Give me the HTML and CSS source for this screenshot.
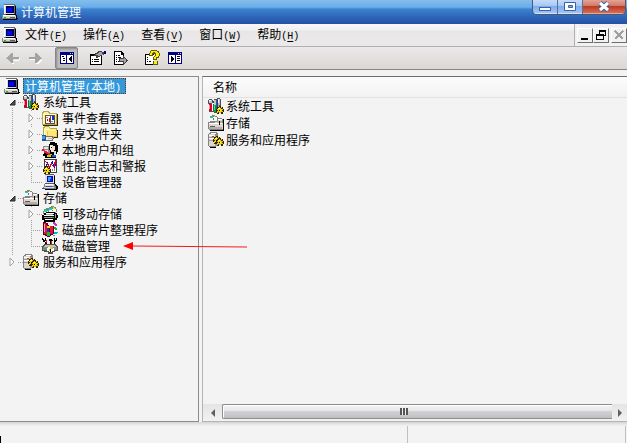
FILE: index.html
```html
<!DOCTYPE html>
<html lang="zh-CN">
<head>
    <meta charset="UTF-8">
    <meta name="viewport" content="width=device-width, initial-scale=1.0">
    <title>计算机管理</title>
    <link rel="stylesheet" href="styles.css">
</head>
<body>
    <!-- Icon set, 16x16 grid -->
    <svg class="sprite" aria-hidden="true">
        <symbol id="i-pc" viewBox="0 0 16 16">
            <path fill="#6b696b" d="M2 0h11v1h1v10H2z"/>
            <path fill="#dedbde" d="M2 1h10v9H2z"/>
            <path fill="#fff" d="M2 1h10v1H3v8H2z"/>
            <path fill="#00005a" d="M4 2h8v7H4z"/>
            <path fill="#0008f7" d="M5 4h5v4H5z"/>
            <path fill="#000" d="M13 2h1v9h1v3h1v1h-1v1H1v-1h13v-4H4v-1h9z"/>
            <path fill="#848284" d="M0 11h14v4H0z"/>
            <path fill="#d6d3ce" d="M1 12h13v2H1z"/>
            <path fill="#fff" d="M1 11h12v1H1z"/>
            <path fill="#00c700" d="M2 13h2v1H2z"/>
            <path fill="#5a595a" d="M8 13h5v1H8z"/>
        </symbol>
        <symbol id="i-gear" viewBox="0 0 8 8">
            <path fill="#312800" d="M3 0h2v1h2v2h1v3H7v2H5V7H3v1H1V6H0V3h1V1h2z"/>
            <path fill="#efcf00" d="M3 1h1v1h1V1h1v1H5v1h2v1H6v1h1v1H5v1H3V6H2v1H1V5h1V4H1V3h1V2h1z"/>
            <path fill="#ffff7b" d="M2 2h2v1H2zM4 4h1v1H4z"/>
            <path fill="#000" d="M3 4h1v1H3z"/>
        </symbol>
        <symbol id="i-tools" viewBox="0 0 16 16">
            <path fill="#525152" d="M0 2h1V1h3v1h1v4h1v8H1V6H0zM6 1h3v14H6zM9 0h3v1h1v12H9z"/>
            <path fill="#c6c3c6" d="M1 2h3v3H1zM6 2h2v5H6zM10 1h2v6h-2z"/>
            <path fill="#fff" d="M1 2h2v1H1zM10 1h1v6h-1zM4 5h1v8H4z"/>
            <path fill="#de0021" d="M1 6h3v7H1z"/>
            <path fill="#ff8c94" d="M1 7h1v4H1z"/>
            <path fill="#009a42" d="M6 7h2v7H6z"/>
            <path fill="#21e78c" d="M6 7h1v5H6z"/>
            <path fill="#1049b5" d="M9 2h1v8H9zM5 3h1v2H5z"/>
            <path fill="#8cb6e7" d="M10 5h1v4h-1z"/>
            <use href="#i-gear" x="8" y="8" width="8" height="8"/>
        </symbol>
        <symbol id="i-folder" viewBox="0 0 16 16">
            <path fill="#b5a652" d="M0 2h1V1h6v1h1v1h7v12H0z"/>
            <path fill="#ffef8c" d="M1 3h1V2h4v1h1v1h7v10H1z"/>
            <path fill="#fffbce" d="M1 4h13v1H2v9H1z"/>
            <path fill="#312c00" d="M15 4h1v12H1v-1h14z"/>
        </symbol>
        <symbol id="i-event" viewBox="0 0 16 16">
            <use href="#i-folder" width="16" height="16"/>
            <path fill="#525152" d="M3 5h10v9H3z"/>
            <path fill="#fff" d="M4 6h4v7H4zM9 6h3v7H9z"/>
            <path fill="#d60000" d="M7 8h1v4H7zM5 9h1v2H5z"/>
            <path fill="#1828e7" d="M10 6h2v4h-2z"/>
            <path fill="#8c8e8c" d="M4 7h2v1H4zM9 11h2v1H9z"/>
        </symbol>
        <symbol id="i-share" viewBox="0 0 16 16">
            <path fill="#b5a652" d="M1 1h1V0h5v1h1v1h7v10H1z"/>
            <path fill="#ffef8c" d="M2 2h1V1h4v1h1v1h6v8H2z"/>
            <path fill="#fffbce" d="M2 3h5v1H3v5H2z"/>
            <path fill="#e7c752" d="M5 5h10v6H5z"/>
            <path fill="#ffe773" d="M6 5h9v1h-1v4H6z"/>
            <path fill="#312c00" d="M15 4h1v8h-5v-1h4z"/>
            <path fill="#18599c" d="M0 9h4v6H0z"/>
            <path fill="#4a9ade" d="M0 10h3v3H0z"/>
            <path fill="#737173" d="M4 10h7v1h1v2h-1v2H4z"/>
            <path fill="#f7ebe7" d="M4 11h6v3H4z"/>
            <path fill="#c6bab5" d="M6 12h5v1H6z"/>
        </symbol>
        <symbol id="i-users" viewBox="0 0 16 16">
            <path fill="#8c8a8c" d="M1 4h6v3h1v4H2V7H1z"/>
            <path fill="#e7e3e7" d="M2 5h4v2H2zM3 8h3v2H3z"/>
            <path fill="#000" d="M8 0h5v1h2v2h1v7h-1v2h-3v1H9v-2H8V8H7V2h1zM2 11h9v3h3v2H3v-2H1v-2h1z"/>
            <path fill="#f7e3ce" d="M8 3h3v1h2v4h-1v2H9V8H8z"/>
            <path fill="#fff" d="M8 4h2v3H8z"/>
            <path fill="#000" d="M9 5h1v1H9z"/>
            <path fill="#ef1831" d="M0 7h2v1h1v1h2v1h1v1h2v2H6v-1H4v-1H2V9H0z"/>
            <path fill="#c6d700" d="M5 13h4v2H5zM8 12h2v1H8z"/>
            <path fill="#1855ce" d="M10 13h4v2h-4z"/>
            <path fill="#dedfe7" d="M12 9h2v3h-2z"/>
        </symbol>
        <symbol id="i-perf" viewBox="0 0 16 16">
            <path fill="#424142" d="M2 1h13v14H2z"/>
            <path fill="#fff" d="M3 2h11v12H3z"/>
            <path fill="#0010ce" d="M3 8h1V6h1V4h1v2h1v2h1V6h1V4h1V3h1v3h1v2h1V5h1v3h-1v2h-1V8h-1V6h-1v1H9v2H8v1H7V8H6V7H5v2H3z"/>
            <path fill="#e70021" d="M3 3h1v1h1v1h1v2h1v1h1V6h1V5h1v2h1v1h1V4h1V2h1v4h-1v3h-2V8h-1V7H9v2H6V7H5V5H4V4H3z"/>
            <path fill="#848684" d="M10 11h1v2h-1zM12 10h1v3h-1z"/>
            <use href="#i-gear" x="1" y="8" width="8" height="8"/>
        </symbol>
        <symbol id="i-device" viewBox="0 0 16 16">
            <path fill="#5a595a" d="M3 0h9v1h1v9H3z"/>
            <path fill="#dedfe7" d="M3 1h9v8H3z"/>
            <path fill="#00109c" d="M5 2h6v6H5z"/>
            <path fill="#39a2ff" d="M6 3h3v2H8v2H6z"/>
            <path fill="#0028ff" d="M9 3h1v4H8V5h1z"/>
            <path fill="#000" d="M12 2h1v8h1v1h1v1h1v3h-1v1H3v-1h11v-3h-2z"/>
            <path fill="#848284" d="M2 10h11v2h1v3H1v-2h1z"/>
            <path fill="#dedbde" d="M3 10h9v2H3zM2 13h10v1H2z"/>
            <path fill="#fff" d="M3 10h8v1H3z"/>
            <path fill="#3151ad" d="M0 14h3v1H0zM4 12h6v1H4z"/>
        </symbol>
        <symbol id="i-disc" viewBox="0 0 10 10">
            <path fill="#848684" d="M3 0h4v1h2v2h1v4H9v2H1V7H0V3h1V1h2z"/>
            <path fill="#f7f3f7" d="M3 1h4v1h1v1h1v4H8v1H2V7H1V3h1V2h1z"/>
            <path fill="#00d7de" d="M2 2h2v2H1V3h1z"/>
            <path fill="#ffef00" d="M5 1h2v1h1v1H6v1H5z"/>
            <path fill="#21c721" d="M3 1h2v2H4V2H3z"/>
            <path fill="#737173" d="M4 4h2v2H4z"/>
        </symbol>
        <symbol id="i-storage" viewBox="0 0 16 16">
            <path fill="#848284" d="M7 3h7v1h1v11H1v-1H0V7h7z"/>
            <path fill="#ded7ce" d="M7 4h7v4h1v6H1V8h6z"/>
            <path fill="#fff" d="M9 4h5v1H9zM1 8h13v1H1z"/>
            <path fill="#b5aea5" d="M9 6h5v2H9zM1 12h13v2H1z"/>
            <path fill="#000" d="M15 4h1v12H2v-1h13zM11 6h1v4h-1z"/>
            <path fill="#5a595a" d="M2 11h5v1H2z"/>
            <use href="#i-disc" x="1" y="0" width="9" height="8"/>
        </symbol>
        <symbol id="i-services" viewBox="0 0 16 16">
            <path fill="#848284" d="M1 1h1V0h7v1h1v13H8v1H1v-1H0V2h1z"/>
            <path fill="#ded7ce" d="M1 2h6v12H1z"/>
            <path fill="#fff" d="M1 3h5v1H1zM1 6h5v1H1zM3 1h5v1H3z"/>
            <path fill="#9c9a9c" d="M1 5h5v1H1zM1 8h5v1H1zM7 3h2v11H7z"/>
            <path fill="#d62c18" d="M4 4h2v1H4z"/>
            <path fill="#000" d="M2 15h6v1H2z"/>
            <use href="#i-gear" x="5" y="4" width="8" height="8"/>
            <use href="#i-gear" x="8" y="6" width="8" height="8"/>
        </symbol>
        <symbol id="i-removable" viewBox="0 0 16 16">
            <use href="#i-disc" x="1" y="2" width="9" height="9"/>
            <use href="#i-disc" x="6" y="0" width="9" height="9"/>
            <path fill="#000" d="M4 6h9v1h2v2h1v3h-1v2h-2v2H2v-2H0V9h2V7h2z"/>
            <path fill="#fff" d="M4 7h8v1H4zM2 9h10v1H2zM3 13h8v1H3z"/>
            <path fill="#9c9a9c" d="M4 8h7v1H4zM2 11h10v1H2zM13 8h1v4h-1z"/>
            <path fill="#00c742" d="M10 11h2v1h-2z"/>
        </symbol>
        <symbol id="i-defrag" viewBox="0 0 16 16">
            <path fill="#5a0018" d="M1 0h3v1h2v2h1v1h5v8h-1v1H9v1H8v1H5v-1H3v-1H1z"/>
            <path fill="#e71042" d="M2 1h2v2h1v10H4v-1H2z"/>
            <path fill="#ff9cad" d="M2 2h1v8H2z"/>
            <path fill="#2134d6" d="M5 6h2v4H5z"/>
            <path fill="#ffd700" d="M5 4h3v2H5z"/>
            <path fill="#ef1831" d="M8 4h3v4H8z"/>
            <path fill="#18b631" d="M5 10h3v4H5z"/>
            <path fill="#de1042" d="M8 8h3v4H8z"/>
            <path fill="#c631b5" d="M11 0h2v1h1v1h1v2h-2V3h-1V2h-1z"/>
            <path fill="#18a642" d="M12 5h2v1h1v2h-2V7h-1z"/>
            <path fill="#00b6ce" d="M12 10h4v1h-1v1h-3zM11 13h2v1h-2z"/>
        </symbol>
        <symbol id="i-disk" viewBox="0 0 16 16">
            <path fill="#000" d="M0 0h1v1h1v1h1V0h1v3H3v1h1v1h1v2H4V6H3V4H1V2H0zM7 1h3v1h1v1H9v4H8V3H7zM12 0h1v2h1V0h1v3h-1v1h-1v3h-1z"/>
            <path fill="#d61829" d="M9 3h1v3H9zM4 2h1v3H4z"/>
            <path fill="#525152" d="M2 6h12v1h1v1h1v5h-3v1h-2v2H6v-2H2v-1H0V8h1V7h1z"/>
            <path fill="#c6c3c6" d="M3 7h10v1h1v1H2V8h1z"/>
            <path fill="#8c8a8c" d="M1 9h14v3H1z"/>
            <path fill="#fff" d="M6 9h5v1h1v3h-2v1H7v-1H5v-3h1z"/>
            <path fill="#d6cf18" d="M8 9h3v2H9v2H7v-2h1z"/>
            <path fill="#000" d="M8 11h1v3H8z"/>
            <path fill="#00c742" d="M2 10h2v1H2z"/>
        </symbol>
        <symbol id="i-back" viewBox="0 0 16 16">
            <path fill="#fff" d="M3 9h1v1h1v1h1v1h1v1h2v-3h6V8h-1v3H9v3H7v-1H6v-1H5v-1H4v-1H3z"/>
            <path fill="#a5a3a5" d="M1 8h1V7h1V6h1V5h1V4h1V3h2v4h6v2H8v4H6v-1H5v-1H4v-1H3V9H1z"/>
        </symbol>
        <symbol id="i-forward" viewBox="0 0 16 16">
            <path fill="#fff" d="M2 9h6v4h2v-1h1v-1h1v-1h1V9h1v1l-4 4H8v-4H2z"/>
            <path fill="#a5a3a5" d="M14 8h-1V7h-1V6h-1V5h-1V4H9V3H7v4H1v2h6v4h2v-1h1v-1h1v-1h1V9h2z"/>
        </symbol>
        <symbol id="i-tree" viewBox="0 0 16 16">
            <path fill="#000084" d="M1 2h14v12H1z"/>
            <path fill="#fff" d="M2 5h5v8H2zM8 5h6v8H8z"/>
            <path fill="#000" d="M3 6h2v1H3zM4 8h2v1H4zM4 10h2v1H4zM12 6h1v6h-1v-1h-1v-1h-1V8h1V7h1z"/>
            <path fill="#c6c7ef" d="M11 3h1v1h-1zM13 3h1v1h-1z"/>
        </symbol>
        <symbol id="i-action" viewBox="0 0 16 16">
            <path fill="#000084" d="M1 2h14v12H1z"/>
            <path fill="#fff" d="M2 5h6v8H2zM9 5h5v8H9z"/>
            <path fill="#000" d="M10 6h3v1h-3zM10 8h3v1h-3zM10 10h3v1h-3zM4 6h1v1h1v1h1v2H6v1H5v1H4z"/>
            <path fill="#c6c7ef" d="M11 3h1v1h-1zM13 3h1v1h-1z"/>
        </symbol>
        <symbol id="i-props" viewBox="0 0 16 16">
            <path fill="#000" d="M0 4h12v11H0z"/>
            <path fill="#fff" d="M1 6h10v8H1z"/>
            <path fill="#000" d="M2 9h1v1H2zM4 9h5v1H4zM2 11h1v1H2zM4 11h5v1H4z"/>
            <path fill="#424142" d="M5 3h2V2h1V1h4v1h2v3h-2v1h-2v1H8v1H6V6H4V5h1z"/>
            <path fill="#a5a2a5" d="M6 4h2V3h1V2h3v2h1v1h-3v1H8V5H6z"/>
            <path fill="#000084" d="M14 1h2v3h-2z"/>
        </symbol>
        <symbol id="i-export" viewBox="0 0 16 16">
            <path fill="#000" d="M1 1h8v1h1v1h1v5h-1V5H8V2H2v12h9v1H1z"/>
            <path fill="#fff" d="M2 2h6v3h2v9H2z"/>
            <path fill="#000" d="M8 2h1v2h2v1H8zM3 5h1v1H3zM5 5h2v1H5zM3 7h1v1H3zM5 7h3v1H5zM3 9h1v1H3zM3 11h1v1H3zM5 11h2v1H5z"/>
            <path fill="#424142" d="M6 8h4V6h1v1h1v1h1v1h1v1h1v1h-1v1h-1v1h-1v1h-1v1h-1v-3H6z"/>
            <path fill="#a5a2a5" d="M7 9h4V8l2 2v1l-2 2v-2H7z"/>
        </symbol>
        <symbol id="i-help" viewBox="0 0 16 16">
            <path fill="#000" d="M1 4h9v11H1z"/>
            <path fill="#fff" d="M2 5h8v9H2z"/>
            <path fill="#000" d="M3 7h1v1H3zM3 9h1v1H3zM3 11h1v1H3zM5 11h2v1H5z"/>
            <path fill="#635900" d="M7 0h6v1h2v2h1v3h-1v2h-2v2H9V7h1V6h1V4H9v2H5V3h1V1h1zM9 11h5v4H9z"/>
            <path fill="#ffef00" d="M7 1h6v1h1v1h1v3h-1v1h-2v2h-2V7h1V6h1V3h-1V2H9v1H8v2H6V3h1zM10 11h3v3h-3z"/>
        </symbol>
    </svg>

    <div class="window">
        <header class="title-bar">
            <svg class="icon"><use href="#i-pc"/></svg>
            <h1>计算机管理</h1>
            <div class="window-buttons">
                <button type="button" class="win-btn" aria-label="最小化">
                    <svg width="14" height="12"><rect x="1.5" y="6.5" width="11" height="3" fill="#fff" stroke="#3a62ac"/></svg>
                </button>
                <button type="button" class="win-btn" aria-label="最大化">
                    <svg width="14" height="12"><path fill="#fff" stroke="#3a62ac" fill-rule="evenodd" d="M1.5 1.5h11v8h-11zM5.500 4.500v2h4v-2z"/></svg>
                </button>
                <button type="button" class="win-btn win-close" aria-label="关闭">
                    <svg width="14" height="12"><path fill="none" stroke="#3f5ea8" stroke-width="5" d="M3 2l8 7M11 2l-8 7"/><path fill="none" stroke="#fff" stroke-width="3" d="M3 2l8 7M11 2l-8 7"/></svg>
                </button>
            </div>
        </header>

        <nav class="menu-bar">
            <svg class="icon"><use href="#i-pc"/></svg>
            <div class="menus">
                <button type="button">文件<span class="key">(<u>F</u>)</span></button>
                <button type="button">操作<span class="key">(<u>A</u>)</span></button>
                <button type="button">查看<span class="key">(<u>V</u>)</span></button>
                <button type="button">窗口<span class="key">(<u>W</u>)</span></button>
                <button type="button">帮助<span class="key">(<u>H</u>)</span></button>
            </div>
            <div class="child-buttons">
                <button type="button" aria-label="最小化窗口"><svg width="12" height="12"><path d="M2 9h7v2H2z"/></svg></button>
                <button type="button" aria-label="还原窗口"><svg width="12" height="12"><path fill-rule="evenodd" d="M4 1h7v6H9v4H1V5h3zM5 3v2h4v1h1V3zM2 7v3h6V7z"/></svg></button>
                <button type="button" class="off" aria-label="关闭窗口" disabled><svg width="12" height="12"><path d="M2 2l8 8M10 2l-8 8"/></svg></button>
            </div>
        </nav>

        <div class="toolbar">
            <div class="tool-group">
                <button type="button" aria-label="后退" disabled><svg class="icon"><use href="#i-back"/></svg></button>
                <button type="button" aria-label="前进" disabled><svg class="icon"><use href="#i-forward"/></svg></button>
            </div>
            <div class="tool-group">
                <button type="button" class="pressed" aria-label="显示控制台树" aria-pressed="true"><svg class="icon"><use href="#i-tree"/></svg></button>
            </div>
            <div class="tool-group">
                <button type="button" aria-label="属性"><svg class="icon"><use href="#i-props"/></svg></button>
                <button type="button" aria-label="导出列表"><svg class="icon"><use href="#i-export"/></svg></button>
            </div>
            <div class="tool-group">
                <button type="button" aria-label="帮助"><svg class="icon"><use href="#i-help"/></svg></button>
                <button type="button" aria-label="显示操作窗格"><svg class="icon"><use href="#i-action"/></svg></button>
            </div>
        </div>

        <main class="workspace">
            <section class="tree-pane">
                <div class="row root">
                    <svg class="icon"><use href="#i-pc"/></svg>
                    <a href="#" class="selected">计算机管理<span class="key">(</span>本地<span class="key">)</span></a>
                </div>
                <ul class="tree">
                    <li>
                        <div class="row">
                            <button type="button" class="expander" aria-label="折叠"><svg width="8" height="8"><path class="open" d="M7 2v5H2z"/></svg></button>
                            <svg class="icon"><use href="#i-tools"/></svg>
                            <a href="#">系统工具</a>
                        </div>
                        <ul>
                            <li><div class="row">
                                <button type="button" class="expander" aria-label="展开"><svg width="8" height="10"><path class="shut" d="M2 1v8l4-4z"/></svg></button>
                                <svg class="icon"><use href="#i-event"/></svg>
                                <a href="#">事件查看器</a>
                            </div></li>
                            <li><div class="row">
                                <button type="button" class="expander" aria-label="展开"><svg width="8" height="10"><path class="shut" d="M2 1v8l4-4z"/></svg></button>
                                <svg class="icon"><use href="#i-share"/></svg>
                                <a href="#">共享文件夹</a>
                            </div></li>
                            <li><div class="row">
                                <button type="button" class="expander" aria-label="展开"><svg width="8" height="10"><path class="shut" d="M2 1v8l4-4z"/></svg></button>
                                <svg class="icon"><use href="#i-users"/></svg>
                                <a href="#">本地用户和组</a>
                            </div></li>
                            <li><div class="row">
                                <button type="button" class="expander" aria-label="展开"><svg width="8" height="10"><path class="shut" d="M2 1v8l4-4z"/></svg></button>
                                <svg class="icon"><use href="#i-perf"/></svg>
                                <a href="#">性能日志和警报</a>
                            </div></li>
                            <li><div class="row leaf">
                                <svg class="icon"><use href="#i-device"/></svg>
                                <a href="#">设备管理器</a>
                            </div></li>
                        </ul>
                    </li>
                    <li>
                        <div class="row">
                            <button type="button" class="expander" aria-label="折叠"><svg width="8" height="8"><path class="open" d="M7 2v5H2z"/></svg></button>
                            <svg class="icon"><use href="#i-storage"/></svg>
                            <a href="#">存储</a>
                        </div>
                        <ul>
                            <li><div class="row">
                                <button type="button" class="expander" aria-label="展开"><svg width="8" height="10"><path class="shut" d="M2 1v8l4-4z"/></svg></button>
                                <svg class="icon"><use href="#i-removable"/></svg>
                                <a href="#">可移动存储</a>
                            </div></li>
                            <li><div class="row leaf">
                                <svg class="icon"><use href="#i-defrag"/></svg>
                                <a href="#">磁盘碎片整理程序</a>
                            </div></li>
                            <li><div class="row leaf">
                                <svg class="icon"><use href="#i-disk"/></svg>
                                <a href="#">磁盘管理</a>
                                <span class="pointer"><svg width="125" height="8" aria-hidden="true">
                                    <path d="M10 4L124 5" stroke="#f01c1c"/>
                                    <path d="M0 4L10 0v8z" fill="#f00"/>
                                </svg></span>
                            </div></li>
                        </ul>
                    </li>
                    <li>
                        <div class="row">
                            <button type="button" class="expander" aria-label="展开"><svg width="8" height="10"><path class="shut" d="M2 1v8l4-4z"/></svg></button>
                            <svg class="icon"><use href="#i-services"/></svg>
                            <a href="#">服务和应用程序</a>
                        </div>
                    </li>
                </ul>
            </section>

            <section class="list-pane">
                <table>
                    <thead>
                        <tr><th scope="col">名称</th></tr>
                    </thead>
                    <tbody>
                        <tr><td><a href="#"><svg class="icon"><use href="#i-tools"/></svg>系统工具</a></td></tr>
                        <tr><td><a href="#"><svg class="icon"><use href="#i-storage"/></svg>存储</a></td></tr>
                        <tr><td><a href="#"><svg class="icon"><use href="#i-services"/></svg>服务和应用程序</a></td></tr>
                    </tbody>
                </table>
                <div class="scrollbar">
                    <button type="button" aria-label="向左滚动"><svg width="6" height="8"><path d="M5 0v8L1 4z"/></svg></button>
                    <div class="thumb"><span class="grip"></span></div>
                    <button type="button" aria-label="向右滚动"><svg width="6" height="8"><path d="M1 0v8l4-4z"/></svg></button>
                </div>
            </section>
        </main>

        <footer class="status-bar">
            <div class="status-main"></div>
            <div class="status-side"></div>
        </footer>
    </div>
</body>
</html>
```
FILE: styles.css
```css
* {
    box-sizing: border-box;
    margin: 0;
    padding: 0;
}

body {
    background-color: #f3f3f3;
    color: #000;
    font-family: "Noto Sans CJK SC", sans-serif;
    font-size: 12px;
    line-height: 16px;
}

button {
    border: none;
    background: none;
    color: inherit;
    font: inherit;
}

a {
    color: inherit;
    text-decoration: none;
}

ul {
    list-style: none;
}

svg {
    display: block;
    flex: none;
}

.sprite {
    position: absolute;
    width: 0;
    height: 0;
}

.icon {
    width: 16px;
    height: 16px;
    shape-rendering: crispEdges;
}

.key {
    font-family: "Liberation Mono", monospace;
    font-size: 10px;
}

.window {
    display: flex;
    flex-direction: column;
    height: 100vh;
}

/* Title bar */
.title-bar {
    display: flex;
    align-items: center;
    gap: 1px;
    height: 24px;
    padding: 0 1px 0 2px;
    color: #fff;
    background: linear-gradient(#84bdec, #69aee8 30%, #3b82d0 38%, #2c62b6 75%, #2450a4);
}

.title-bar h1 {
    flex: 1;
    padding-left: 2px;
    font-size: 12px;
    font-weight: normal;
}

.window-buttons {
    display: flex;
    align-self: flex-start;
    border: 1px solid #4a5874;
    border-top: none;
    border-radius: 0 0 5px 5px;
    overflow: hidden;
}

.win-btn {
    display: flex;
    align-items: center;
    justify-content: center;
    width: 25px;
    height: 14px;
    border-right: 1px solid #56719c;
    background: linear-gradient(#c4dcf8, #a8c8f4 40%, #7fabea 45%, #a6c8f6);
    box-shadow: inset 0 -1px #cfe2fa;
}

.win-close {
    width: 42px;
    border-right: none;
    background: linear-gradient(#e2a598, #d47a68 40%, #b93a22 45%, #d8765c);
    box-shadow: inset 0 -1px #e8a898;
}

/* Menu bar */
.menu-bar {
    display: flex;
    align-items: center;
    height: 23px;
    padding-left: 2px;
    border-bottom: 1px solid #b0b0b0;
    background: linear-gradient(#f8f8f8, #f0f0f0 28%, #e8e6e6 32%, #ebe9e9);
}

.menus {
    display: flex;
    flex: 1;
    gap: 16px;
    padding-left: 7px;
}

.menus u {
    text-underline-offset: 2px;
}

.child-buttons {
    display: flex;
    align-items: center;
    height: 22px;
    padding-left: 2px;
    border-left: 1px solid #b0b0b0;
    background-color: #f1f1f1;
}

.child-buttons button {
    display: flex;
    align-items: center;
    justify-content: center;
    width: 16px;
    height: 15px;
    border: 1px solid #fff;
    border-right-color: #6e6e6e;
    border-bottom-color: #6e6e6e;
    shape-rendering: crispEdges;
}

.child-buttons .off {
    margin-left: 2px;
    stroke: #a0a0a0;
    stroke-width: 2px;
}

/* Toolbar */
.toolbar {
    display: flex;
    gap: 8px;
    height: 23px;
    padding-left: 1px;
    border-bottom: 1px solid #858585;
    background: linear-gradient(#ebe9e9, #dad7d4);
}

.tool-group {
    display: flex;
}

.tool-group button {
    display: flex;
    align-items: center;
    justify-content: center;
    width: 23px;
    height: 22px;
}

.tool-group .pressed {
    border: 1px solid #858585;
    border-radius: 2px;
    background-color: #bcbcbc;
    box-shadow: inset 1px 1px 2px #8e8e8e;
}

/* Panes */
.workspace {
    display: flex;
    flex: 1;
    gap: 3px;
    min-height: 0;
    margin-top: 6px;
}

.tree-pane {
    width: 199px;
    padding: 1px 0 0 4px;
    border: 1px solid #8c8c8c;
    border-left: none;
}

.row {
    position: relative;
    display: flex;
    align-items: center;
    height: 16px;
    white-space: nowrap;
}

.row > a {
    padding-left: 4px;
}

.row > .selected {
    height: 16px;
    margin-left: 3px;
    padding: 0 5px 0 2px;
    outline: 1px dotted #6b3a10;
    outline-offset: -1px;
    background-color: #3399dc;
    color: #fff;
}

.tree ul {
    margin-left: 19px;
}

.tree li {
    background: repeating-linear-gradient(#a0a0a0 0 1px, transparent 1px 2px) 8px 0 / 1px 100% no-repeat;
}

.tree li:last-child {
    background-size: 1px 8px;
}

.tree .row {
    background: repeating-linear-gradient(90deg, #a0a0a0 0 1px, transparent 1px 2px) 8px 8px / 11px 1px no-repeat;
}

.leaf {
    padding-left: 19px;
}

.expander {
    display: flex;
    align-items: center;
    justify-content: center;
    width: 10px;
    height: 12px;
    margin: 0 6px 0 3px;
    background-color: #f3f3f3;
}

.open {
    fill: #505050;
    stroke: #262626;
}

.shut {
    fill: #fff;
    stroke: #a0a0a0;
}

.pointer {
    position: absolute;
    left: 100px;
    top: 4px;
    z-index: 1;
}

.list-pane {
    display: flex;
    flex: 1;
    flex-direction: column;
    justify-content: space-between;
    min-width: 0;
    border: 1px solid #b4b4b4;
    border-top-color: #6e6e6e;
    border-right: none;
}

.list-pane table {
    width: 100%;
    border-collapse: collapse;
}

.list-pane th {
    height: 20px;
    padding-left: 10px;
    border-bottom: 1px solid #e2e2e2;
    background: linear-gradient(#fcfcfc, #f2f2f2);
    font-weight: normal;
    text-align: left;
}

.list-pane td {
    height: 17px;
    padding-left: 5px;
}

.list-pane td a {
    display: flex;
    align-items: center;
    gap: 2px;
}

.scrollbar {
    display: flex;
    height: 17px;
    background: linear-gradient(#e4e4e4, #f2f2f2);
}

.scrollbar button {
    display: flex;
    align-items: center;
    justify-content: center;
    width: 15px;
    fill: #606060;
}

.scrollbar button:first-child {
    width: 19px;
}

.thumb {
    display: flex;
    flex: 1;
    align-items: center;
    justify-content: center;
    height: 15px;
    padding-right: 28px;
    border: 1px solid #8e8e8e;
    border-right: none;
    border-radius: 2px 0 0 2px;
    background: linear-gradient(#f4f4f4, #e6e6e8 45%, #d2d2d4 50%, #bfbfc2);
    box-shadow: inset 1px 1px #fff;
}

.grip {
    width: 8px;
    height: 7px;
    background: repeating-linear-gradient(90deg, #555 0 2px, #eee 2px 3px);
}

/* Status bar */
.status-bar {
    display: flex;
    height: 21px;
    padding: 4px 1px 0 0;
    background: linear-gradient(#d4d4d4, #f3f3f3 4px);
}

.status-main {
    flex: 1;
    border-right: 1px solid #c0c0c0;
    background: linear-gradient(#000, #000) 0 100% / 1px 7px no-repeat;
}

.status-side {
    width: 218px;
    border-right: 1px solid #c0c0c0;
}
```
